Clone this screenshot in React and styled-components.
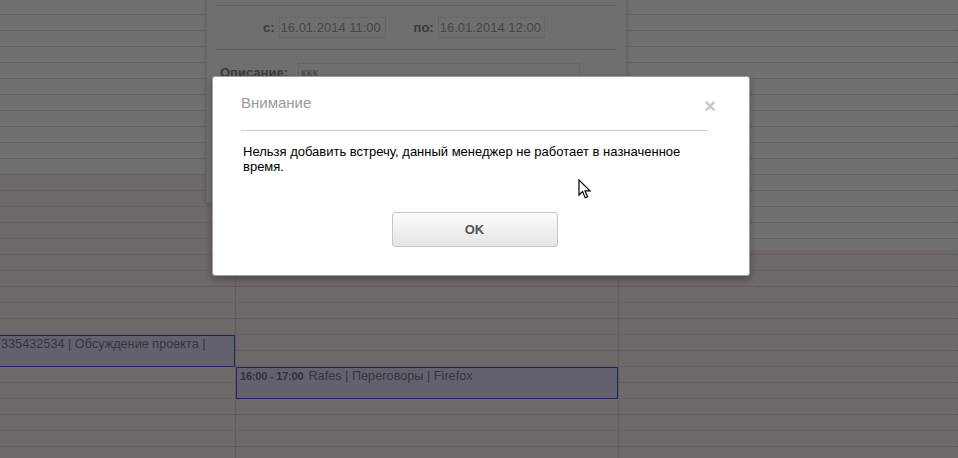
import React from 'react';
import styled, { createGlobalStyle } from 'styled-components';

const GlobalStyle = createGlobalStyle`
  html, body {
    margin: 0;
    padding: 0;
  }
  body {
    font-family: "Liberation Sans", Arial, sans-serif;
    background: #fff;
  }
`;

const Page = styled.div`
  position: relative;
  width: 958px;
  height: 458px;
  overflow: hidden;
  background: #faece8;
`;

const Calendar = styled.div`
  display: grid;
  grid-template-columns: 236px 383px 1fr;
  margin-top: -1px;
`;

const DayColumn = styled.div`
  position: relative;
  border-right: 1px solid #d6d6d6;
  background: linear-gradient(
    to bottom,
    #fff ${p => p.$workEnd}px,
    #faece8 ${p => p.$workEnd}px
  );
  &:last-child {
    border-right: none;
  }
`;

const Slot = styled.div`
  height: 16px;
  box-sizing: border-box;
  border-bottom: 1px ${p => (p.$half ? 'dotted #c2c2c2' : 'solid #e4e4e4')};
`;

const Event = styled.div`
  position: absolute;
  top: ${p => p.$top}px;
  left: ${p => p.$left}px;
  right: 0;
  height: 32px;
  box-sizing: border-box;
  padding: 1px 3px;
  border: 1px solid #4a4aff;
  background: #dfdffc;
  color: #7a7a84;
  font-size: 12.7px;
  line-height: 15px;
  white-space: nowrap;
  overflow: hidden;
`;

const EventTime = styled.b`
  font-size: 11px;
  letter-spacing: -0.2px;
  color: #70707a;
  margin-right: 5px;
`;

const Popover = styled.div`
  position: absolute;
  left: 206px;
  top: -20px;
  width: 421px;
  height: 223px;
  box-sizing: border-box;
  padding: 0 9px;
  background: #fcfcfc;
  border: 1px solid #e8e8e8;
  box-shadow: 0 2px 5px rgba(0, 0, 0, 0.18);
`;

const PopHeader = styled.div`
  height: 24px;
  border-bottom: 1px solid #d8d8d8;
`;

const DateRow = styled.div`
  display: flex;
  align-items: center;
  height: 43px;
  padding-left: 47px;
  border-bottom: 1px solid #d8d8d8;
  font-size: 13px;
`;

const Label = styled.b`
  color: #878787;
  min-width: ${p => p.$width || 0}px;
  margin-right: ${p => p.$gap || 0}px;
`;

const Field = styled.div`
  box-sizing: border-box;
  width: ${p => p.$width}px;
  height: ${p => p.$height}px;
  margin-right: ${p => p.$after || 0}px;
  padding: ${p => (p.$multi ? '1px 2px' : '0 1px')};
  display: flex;
  align-items: ${p => (p.$multi ? 'flex-start' : 'center')};
  border: 1px dotted #d4d4d4;
  color: #a2a2a2;
  line-height: 15px;
`;

const DescRow = styled.div`
  display: flex;
  align-items: flex-start;
  padding: 13px 0 0 4px;
  font-size: 13px;
  line-height: 15px;
  & > b {
    margin-top: 2px;
  }
`;

const Backdrop = styled.div`
  position: absolute;
  inset: 0;
  background: rgba(0, 0, 0, 0.56);
`;

const Modal = styled.div`
  position: absolute;
  left: 212px;
  top: 76px;
  width: 538px;
  box-sizing: border-box;
  padding: 17px 41px 28px 28px;
  background: #fff;
  border: 1px solid #a0a0a0;
  border-radius: 3px;
  box-shadow: 0 3px 7px rgba(0, 0, 0, 0.3);
`;

const ModalHeader = styled.div`
  padding-bottom: 18px;
  border-bottom: 1px solid #cbcbcb;
`;

const ModalTitle = styled.h3`
  margin: 0;
  font-size: 15px;
  line-height: 18px;
  font-weight: normal;
  color: #999;
`;

const CloseButton = styled.span`
  position: absolute;
  top: 19px;
  right: 33px;
  font-size: 20px;
  line-height: 20px;
  font-weight: bold;
  color: #c8c8c8;
  cursor: pointer;
`;

const ModalBody = styled.p`
  margin: 13px 0 0 2px;
  font-size: 13px;
  line-height: 15px;
  color: #000;
`;

const ModalFooter = styled.div`
  display: flex;
  justify-content: center;
  margin-top: 38px;
`;

const Button = styled.button`
  width: 166px;
  height: 35px;
  border: 1px solid #c6c6c6;
  border-radius: 3px;
  background: linear-gradient(to bottom, #fbfbfb, #e5e5e5);
  font-family: inherit;
  font-size: 13px;
  font-weight: bold;
  color: #555;
  cursor: pointer;
`;

const Cursor = styled.svg`
  position: absolute;
  left: 578px;
  top: 179px;
`;

const SLOTS = Array.from({ length: 30 }, (_, i) => i);

const columns = [
  {
    workEnd: 176,
    event: { top: 336, left: -3, content: '335432534 | Обсуждение проекта |' },
  },
  {
    workEnd: 251,
    event: { top: 368, left: 0, time: '16:00 - 17:00', content: 'Rafes | Переговоры | Firefox' },
  },
  { workEnd: 251 },
];

const App = () => {
  return (
    <>
      <GlobalStyle />
      <Page>
        <Calendar>
          {columns.map((col, c) => (
            <DayColumn key={c} $workEnd={col.workEnd}>
              {SLOTS.map(i => (
                <Slot key={i} $half={i % 2 === 1} />
              ))}
              {col.event && (
                <Event $top={col.event.top} $left={col.event.left}>
                  {col.event.time && <EventTime>{col.event.time}</EventTime>}
                  {col.event.content}
                </Event>
              )}
            </DayColumn>
          ))}
        </Calendar>

        <Popover>
          <PopHeader />
          <DateRow>
            <Label $gap={4}>с:</Label>
            <Field $width={107} $height={21} $after={28}>16.01.2014 11:00</Field>
            <Label $gap={4}>по:</Label>
            <Field $width={107} $height={21}>16.01.2014 12:00</Field>
          </DateRow>
          <DescRow>
            <Label $width={78}>Описание:</Label>
            <Field $width={282} $height={80} $multi>ккк</Field>
          </DescRow>
        </Popover>

        <Backdrop />

        <Modal>
          <ModalHeader>
            <ModalTitle>Внимание</ModalTitle>
          </ModalHeader>
          <CloseButton>×</CloseButton>
          <ModalBody>
            Нельзя добавить встречу, данный менеджер не работает в назначенное время.
          </ModalBody>
          <ModalFooter>
            <Button>OK</Button>
          </ModalFooter>
        </Modal>

        <Cursor width="14" height="21" viewBox="0 0 14 21">
          <path
            d="M1 1 L1 16 L4.6 12.6 L7.2 18.8 L9.6 17.8 L7 11.8 L12 11.8 Z"
            fill="#fff"
            stroke="#000"
            strokeWidth="1.2"
            strokeLinejoin="miter"
          />
        </Cursor>
      </Page>
    </>
  );
};

export default App;
